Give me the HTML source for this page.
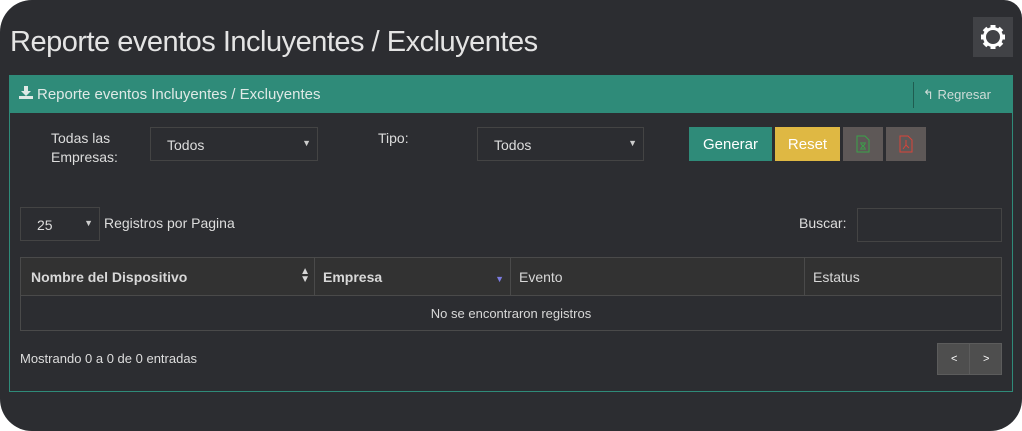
<!DOCTYPE html>
<html><head><meta charset="utf-8"><style>
*{box-sizing:border-box;margin:0;padding:0}
html,body{width:1022px;height:431px;background:#fff;overflow:hidden}
body{font-family:"Liberation Sans","DejaVu Sans",sans-serif;color:#d8d8d8}
.win{position:absolute;left:0;top:0;width:1022px;height:431px;background:#2c2d31;border-radius:32px 18px 32px 32px}
.a{position:absolute}
.title{left:10px;top:26px;font-size:29px;font-weight:300;color:#e4e4e4;letter-spacing:-0.5px}
.gear{left:973px;top:17px;width:40px;height:40px;background:#414246}
.panel{left:9px;top:75px;width:1004px;height:317px;border:1px solid #2f8b79}
.ph{left:9px;top:75px;width:1004px;height:38px;background:#2f8b79}
.ph .t{position:absolute;left:28px;top:11px;font-size:15px;color:#dfe9e6}
.sel{border:1px solid #444;background:#2c2d31;font-size:14px;color:#ddd}
.sel span{position:absolute;left:16px;top:9px}
.sel i{position:absolute;right:6px;top:10px;font-style:normal;font-size:9px;color:#ccc}
.lbl{font-size:14px;color:#ddd;line-height:19px}
.btn{height:34px;top:127px;font-size:15px;color:#fff;text-align:center;line-height:36px}
th,td{border:1px solid #4a4a4a}
</style></head><body>
<div class="win">
<div class="a title">Reporte eventos Incluyentes / Excluyentes</div>
<div class="a gear"><svg width="40" height="40" viewBox="0 0 40 40"><g fill="#fff"><circle cx="20" cy="20" r="10"/><rect x="17.5" y="8" width="5" height="24"/><rect x="8" y="17.5" width="24" height="5"/><rect x="17.5" y="8" width="5" height="24" transform="rotate(45 20 20)"/><rect x="17.5" y="8" width="5" height="24" transform="rotate(-45 20 20)"/></g><circle cx="20" cy="20" r="7" fill="#414246"/></svg></div>
<div class="a panel"></div>
<div class="a ph"><svg style="position:absolute;left:10px;top:11px" width="14" height="13" viewBox="0 0 14 13"><path d="M5 0h4v5h3l-5 5-5-5h3z" fill="#dfe9e6"/><rect x="0" y="10" width="14" height="3" fill="#dfe9e6"/></svg><div class="t">Reporte eventos Incluyentes / Excluyentes</div>
<div style="position:absolute;left:904px;top:7px;width:1px;height:26px;background:#1f5c50"></div>
<div style="position:absolute;left:914px;top:12px;font-size:13px;color:#cfdcd8">↰ Regresar</div></div>
<div class="a lbl" style="left:51px;top:129px">Todas las<br>Empresas:</div>
<div class="a sel" style="left:150px;top:127px;width:168px;height:34px"><span>Todos</span><i>▼</i></div>
<div class="a lbl" style="left:378px;top:129px">Tipo:</div>
<div class="a sel" style="left:477px;top:127px;width:167px;height:34px"><span>Todos</span><i>▼</i></div>
<div class="a btn" style="left:689px;width:83px;background:#2f8b79">Generar</div>
<div class="a btn" style="left:775px;width:65px;background:#dfb843">Reset</div>
<div class="a btn" style="left:843px;width:40px;background:#5e5857;line-height:normal"><svg width="14" height="18" viewBox="0 0 14 18" style="margin-top:8px"><path d="M1 1h8l4 4v12H1z" fill="none" stroke="#3aa34a"/><path d="M4 8h6M5 9l4 4M9 9l-4 4M4 14h6" stroke="#3aa34a"/></svg></div>
<div class="a btn" style="left:886px;width:40px;background:#5e5857;line-height:normal"><svg width="14" height="18" viewBox="0 0 14 18" style="margin-top:8px"><path d="M1 1h8l4 4v12H1z" fill="none" stroke="#d9443a"/><path d="M7 5v5l-3 4M7 10l3 3" fill="none" stroke="#d9443a"/></svg></div>
<div class="a sel" style="left:20px;top:207px;width:80px;height:34px"><span style="left:16px">25</span><i>▼</i></div>
<div class="a lbl" style="left:104px;top:214px">Registros por Pagina</div>
<div class="a lbl" style="left:799px;top:214px">Buscar:</div>
<div class="a sel" style="left:857px;top:208px;width:145px;height:34px"></div>
<table class="a" style="left:20px;top:257px;width:982px;border-collapse:collapse;font-size:14px">
<tr style="background:#323232;height:38px;font-weight:bold;color:#d8d8d8">
<th style="width:294px;text-align:left;padding-left:10px;position:relative">Nombre del Dispositivo<span style="position:absolute;right:4px;top:10px;font-size:10px;line-height:8px">▲<br>▼</span></th>
<th style="width:196px;text-align:left;padding-left:8px;position:relative">Empresa<span style="position:absolute;right:6px;top:16px;font-size:9px;color:#7b7be0">▼</span></th>
<th style="width:294px;text-align:left;padding-left:8px;font-weight:normal">Evento</th>
<th style="text-align:left;padding-left:8px;font-weight:normal">Estatus</th></tr>
<tr style="height:35px"><td colspan="4" style="text-align:center;font-size:13px">No se encontraron registros</td></tr>
</table>
<div class="a" style="left:20px;top:351px;font-size:13px;color:#ddd">Mostrando 0 a 0 de 0 entradas</div>
<div class="a" style="left:937px;top:343px;width:65px;height:32px;background:#4e4e4e;border:1px solid #5c5c5c;font-size:11px;color:#fff">
<span style="position:absolute;left:13px;top:9px">&lt;</span><div style="position:absolute;left:31px;top:0;width:1px;height:30px;background:#5c5c5c"></div><span style="position:absolute;left:45px;top:9px">&gt;</span></div>
</div>
</body></html>
